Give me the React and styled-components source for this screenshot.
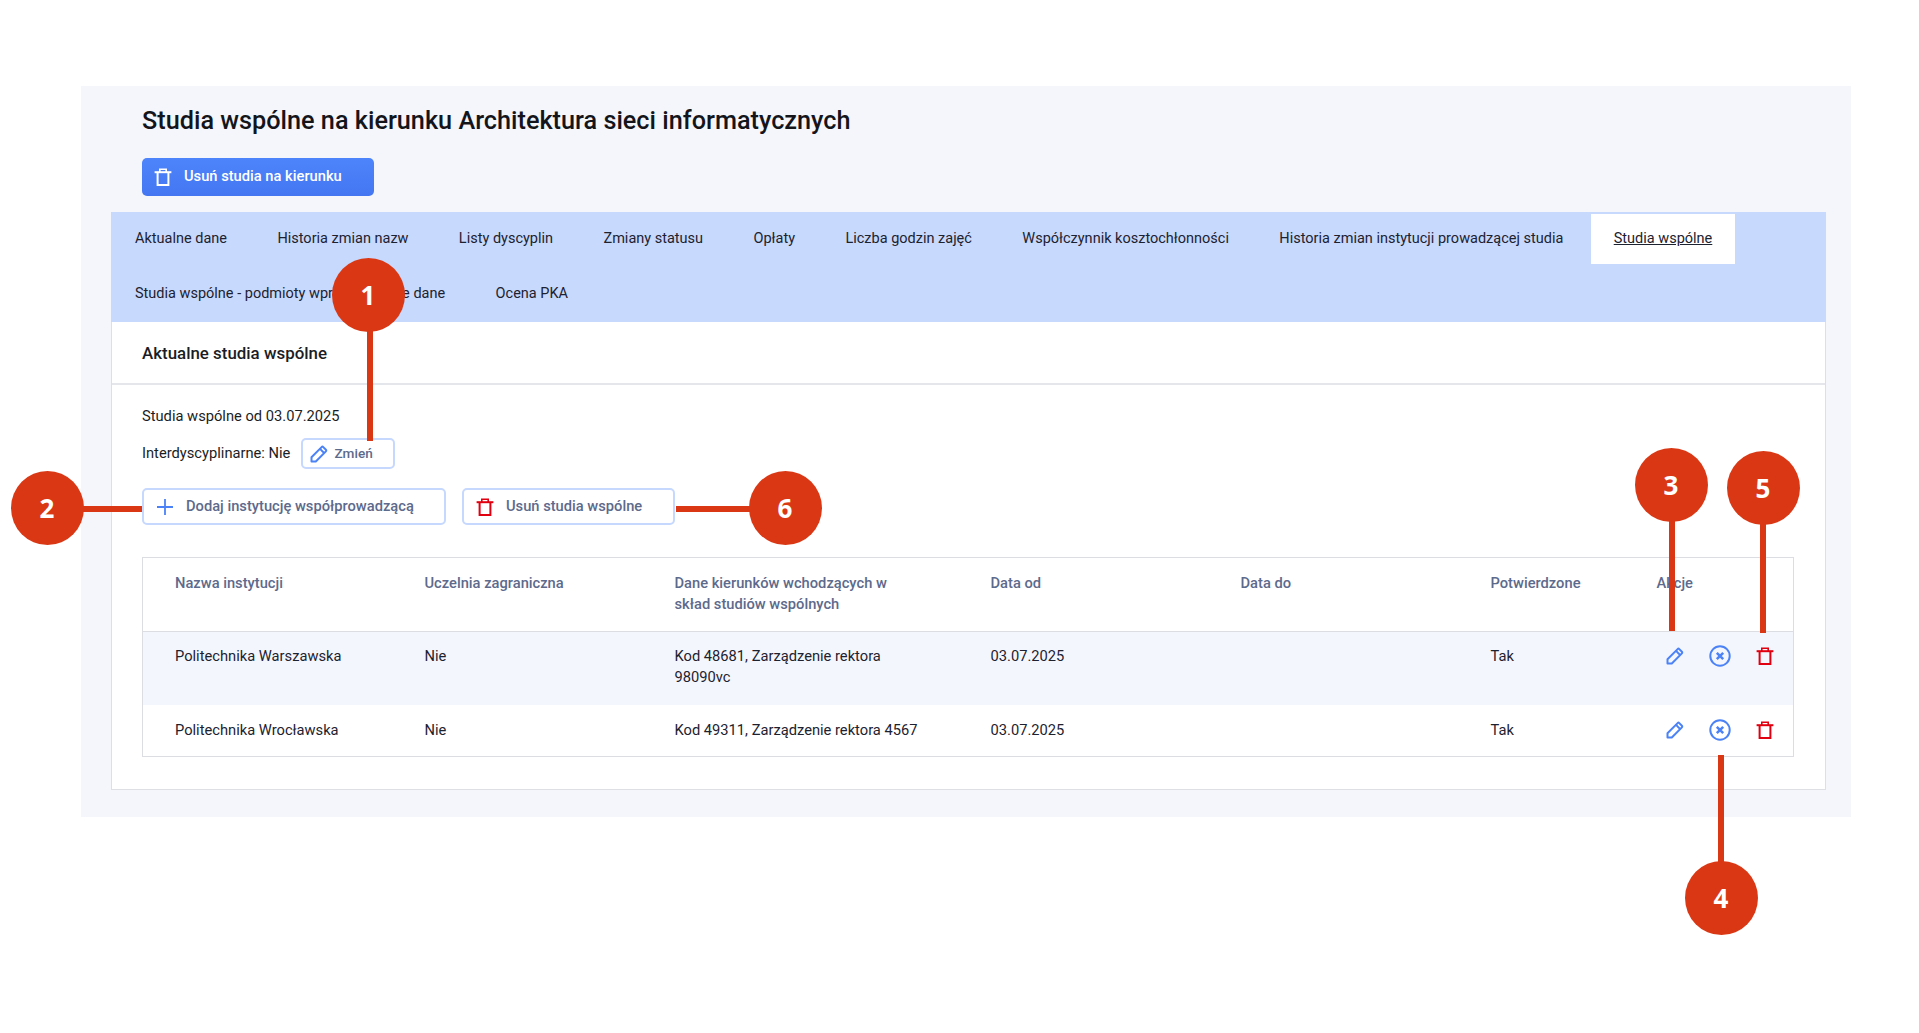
import styled, { createGlobalStyle } from "styled-components";

const Global = createGlobalStyle`
  html, body { margin: 0; padding: 0; background: #fff; }
  body { font-family: Roboto, "Liberation Sans", sans-serif; color: #1b1d24; font-size: 14.7px; }
`;

const Page = styled.div`
  position: relative;
  width: 1919px;
  height: 1033px;
  padding: 86px 0 0 81px;
  box-sizing: border-box;
  overflow: hidden;
`;

const Panel = styled.div`
  width: 1770px;
  box-sizing: border-box;
  background: #f4f6fb;
  padding: 20px 25px 27px 30px;
`;

const Title = styled.h1`
  margin: 0 0 22px 31px;
  font-size: 25.25px;
  line-height: 30px;
  font-weight: 500;
  color: #14151a;
`;

const DangerButton = styled.button`
  display: flex;
  align-items: center;
  gap: 12px;
  width: 232px;
  height: 38px;
  margin: 0 0 16px 31px;
  padding: 0 0 2px 12px;
  border: 0;
  border-radius: 5px;
  background: linear-gradient(#4d84fb, #4476f2);
  color: #fff;
  font: 500 14.7px Roboto, sans-serif;
  svg { color: #fff; margin-top: 2px; }
`;

const TabBar = styled.div`
  display: flex;
  flex-wrap: wrap;
  gap: 5px 4.4px;
  padding: 2px 1px 3px;
  background: #c7d9fd;
`;

const Tab = styled.div`
  height: 50px;
  padding: 0 23px 2px;
  box-sizing: border-box;
  display: flex;
  align-items: center;
  font-size: 14.5px;
  background: ${(p) => (p.$active ? "#fff" : "transparent")};
  text-decoration: ${(p) => (p.$active ? "underline" : "none")};
  color: #1d2230;
`;

const Card = styled.div`
  background: #fff;
  border: 1px solid #dedfe5;
  border-top: 0;
`;

const CardHead = styled.h2`
  margin: 0;
  height: 63px;
  padding: 0 30px;
  box-sizing: border-box;
  display: flex;
  align-items: center;
  font-size: 16.9px;
  font-weight: 500;
  border-bottom: 2px solid #e5e6eb;
`;

const CardBody = styled.div`
  padding: 21px 30px 32px 30px;
`;

const Line = styled.div`
  line-height: 20px;
`;

const InlineRow = styled.div`
  display: flex;
  align-items: center;
  gap: 11px;
  margin: 12px 0 19px;
`;

const InlineLabel = styled.span`
  padding-bottom: 2px;
`;

const OutlineButton = styled.button`
  display: flex;
  align-items: center;
  gap: ${(p) => p.$gap || 13}px;
  width: ${(p) => p.$w}px;
  height: ${(p) => p.$h}px;
  padding: 0 0 2px ${(p) => p.$pad}px;
  border: 2px solid #c6d8fd;
  border-radius: 5px;
  background: #fff;
  box-sizing: border-box;
  color: #5d6a8c;
  font: 500 ${(p) => p.$size || 14.7}px Roboto, sans-serif;
  svg { margin-top: 2px; }
`;

const ButtonRow = styled.div`
  display: flex;
  gap: 16px;
  margin-bottom: 32px;
`;

const Table = styled.table`
  width: 1651px;
  table-layout: fixed;
  border-collapse: collapse;
  border: 1px solid #dcdde3;
  background: #fff;
  font-size: 14.7px;
  line-height: 21px;
`;

const Th = styled.th`
  padding: 15px 35px 16px 32px;
  text-align: left;
  vertical-align: top;
  font-weight: 500;
  color: #5d6a8c;
  border-bottom: 1px solid #dcdde3;
`;

const Tr = styled.tr`
  background: ${(p) => (p.$shaded ? "#f4f6fd" : "#fff")};
  td {
    padding-top: ${(p) => (p.$shaded ? 14 : 15)}px;
    padding-bottom: ${(p) => (p.$shaded ? 17 : 15)}px;
  }
`;

const Td = styled.td`
  padding-left: 32px;
  padding-right: 35px;
  vertical-align: top;
  color: #1d2230;
`;

const ActionsCell = styled(Td)`
  padding-right: 0;
`;

const Actions = styled.div`
  display: flex;
  gap: 9px;
  margin-top: -1px;
  margin-bottom: 1px;
`;

const IconBox = styled.span`
  width: 36px;
  height: 21px;
  display: flex;
  align-items: center;
  justify-content: center;
  color: ${(p) => (p.$red ? "#e0000f" : "#4b82f6")};
`;

const Bubble = styled.div`
  position: absolute;
  left: ${(p) => p.$x - 36.5}px;
  top: ${(p) => p.$y - 37}px;
  width: 73px;
  height: 74px;
  padding-bottom: 1px;
  box-sizing: border-box;
  border-radius: 50%;
  background: #da3815;
  color: #fff;
  display: flex;
  align-items: center;
  justify-content: center;
  font: 700 26px "Open Sans", sans-serif;
`;

const Leader = styled.div`
  position: absolute;
  left: ${(p) => p.$x}px;
  top: ${(p) => p.$y}px;
  width: ${(p) => p.$w}px;
  height: ${(p) => p.$h}px;
  background: #da3815;
`;

const Trash = ({ color = "currentColor" }) => (
  <svg width="18" height="18" viewBox="0 0 18 18" fill="none" stroke={color} strokeWidth="2">
    <path d="M0.6 4.2H17.4" />
    <path d="M5.8 4V1.2H12.2V4" strokeWidth="1.6" />
    <path d="M3.6 4.2V17H14.4V4.2" />
  </svg>
);

const Pencil = () => (
  <svg width="18" height="18" viewBox="0 0 18 18" fill="none" stroke="#4b82f6" strokeWidth="2" strokeLinejoin="round">
    <path d="M1.5 16.5V12.2L11.6 2.1C12.1 1.6 12.8 1.6 13.3 2.1L15.9 4.7C16.4 5.2 16.4 5.9 15.9 6.4L5.8 16.5Z" />
    <path d="M10 3.9L14.1 8" />
  </svg>
);

const CloseCircle = () => (
  <svg width="22" height="22" viewBox="0 0 22 22" fill="none" stroke="#4b82f6">
    <circle cx="11" cy="11" r="9.7" strokeWidth="2" />
    <path d="M7.8 7.8L14.2 14.2M14.2 7.8L7.8 14.2" strokeWidth="2.5" />
  </svg>
);

const Plus = () => (
  <svg width="16" height="16" viewBox="0 0 16 16" stroke="#4b82f6" strokeWidth="1.8">
    <path d="M8 0V16M0 8H16" />
  </svg>
);

const tabs = [
  "Aktualne dane",
  "Historia zmian nazw",
  "Listy dyscyplin",
  "Zmiany statusu",
  "Opłaty",
  "Liczba godzin zajęć",
  "Współczynnik kosztochłonności",
  "Historia zmian instytucji prowadzącej studia",
  "Studia wspólne",
  "Studia wspólne - podmioty wprowadzające dane",
  "Ocena PKA",
];

const columns = [
  ["Nazwa instytucji", 250],
  ["Uczelnia zagraniczna", 250],
  ["Dane kierunków wchodzących w skład studiów wspólnych", 316],
  ["Data od", 250],
  ["Data do", 250],
  ["Potwierdzone", 166],
  ["Akcje", 169],
];

const rows = [
  ["Politechnika Warszawska", "Nie", "Kod 48681, Zarządzenie rektora 98090vc", "03.07.2025", "", "Tak"],
  ["Politechnika Wrocławska", "Nie", "Kod 49311, Zarządzenie rektora 4567", "03.07.2025", "", "Tak"],
];

const bubbles = [
  [1, 368, 295],
  [2, 47, 508],
  [3, 1671, 485],
  [4, 1721, 898],
  [5, 1763, 488],
  [6, 785, 508],
];

const leaders = [
  [367, 330, 6, 111],
  [82, 506, 60, 6],
  [1669, 520, 6, 111],
  [1718, 755, 6, 108],
  [1760, 523, 6, 110],
  [676, 506, 76, 6],
];

export default function App() {
  return (
    <Page>
      <Global />
      <Panel>
        <Title>Studia wspólne na kierunku Architektura sieci informatycznych</Title>
        <DangerButton>
          <Trash />
          Usuń studia na kierunku
        </DangerButton>
        <TabBar>
          {tabs.map((t) => (
            <Tab key={t} $active={t === "Studia wspólne"}>
              {t}
            </Tab>
          ))}
        </TabBar>
        <Card>
          <CardHead>Aktualne studia wspólne</CardHead>
          <CardBody>
            <Line>Studia wspólne od 03.07.2025</Line>
            <InlineRow>
              <InlineLabel>Interdyscyplinarne: Nie</InlineLabel>
              <OutlineButton $w={94} $h={31} $pad={7} $gap={6} $size={13.6}>
                <Pencil />
                Zmień
              </OutlineButton>
            </InlineRow>
            <ButtonRow>
              <OutlineButton $w={304} $h={37} $pad={13} $gap={13}>
                <Plus />
                Dodaj instytucję współprowadzącą
              </OutlineButton>
              <OutlineButton $w={213} $h={37} $pad={12} $gap={12}>
                <Trash color="#e0000f" />
                Usuń studia wspólne
              </OutlineButton>
            </ButtonRow>
            <Table>
              <colgroup>
                {columns.map(([name, w]) => (
                  <col key={name} width={w} />
                ))}
              </colgroup>
              <thead>
                <tr>
                  {columns.map(([name]) => (
                    <Th key={name}>{name}</Th>
                  ))}
                </tr>
              </thead>
              <tbody>
                {rows.map((row, i) => (
                  <Tr key={row[0]} $shaded={i === 0}>
                    {row.map((cell, j) => (
                      <Td key={j}>{cell}</Td>
                    ))}
                    <ActionsCell>
                      <Actions>
                        <IconBox><Pencil /></IconBox>
                        <IconBox><CloseCircle /></IconBox>
                        <IconBox $red><Trash /></IconBox>
                      </Actions>
                    </ActionsCell>
                  </Tr>
                ))}
              </tbody>
            </Table>
          </CardBody>
        </Card>
      </Panel>
      {leaders.map(([x, y, w, h]) => (
        <Leader key={`${x}-${y}`} $x={x} $y={y} $w={w} $h={h} />
      ))}
      {bubbles.map(([n, x, y]) => (
        <Bubble key={n} $x={x} $y={y}>{n}</Bubble>
      ))}
    </Page>
  );
}
